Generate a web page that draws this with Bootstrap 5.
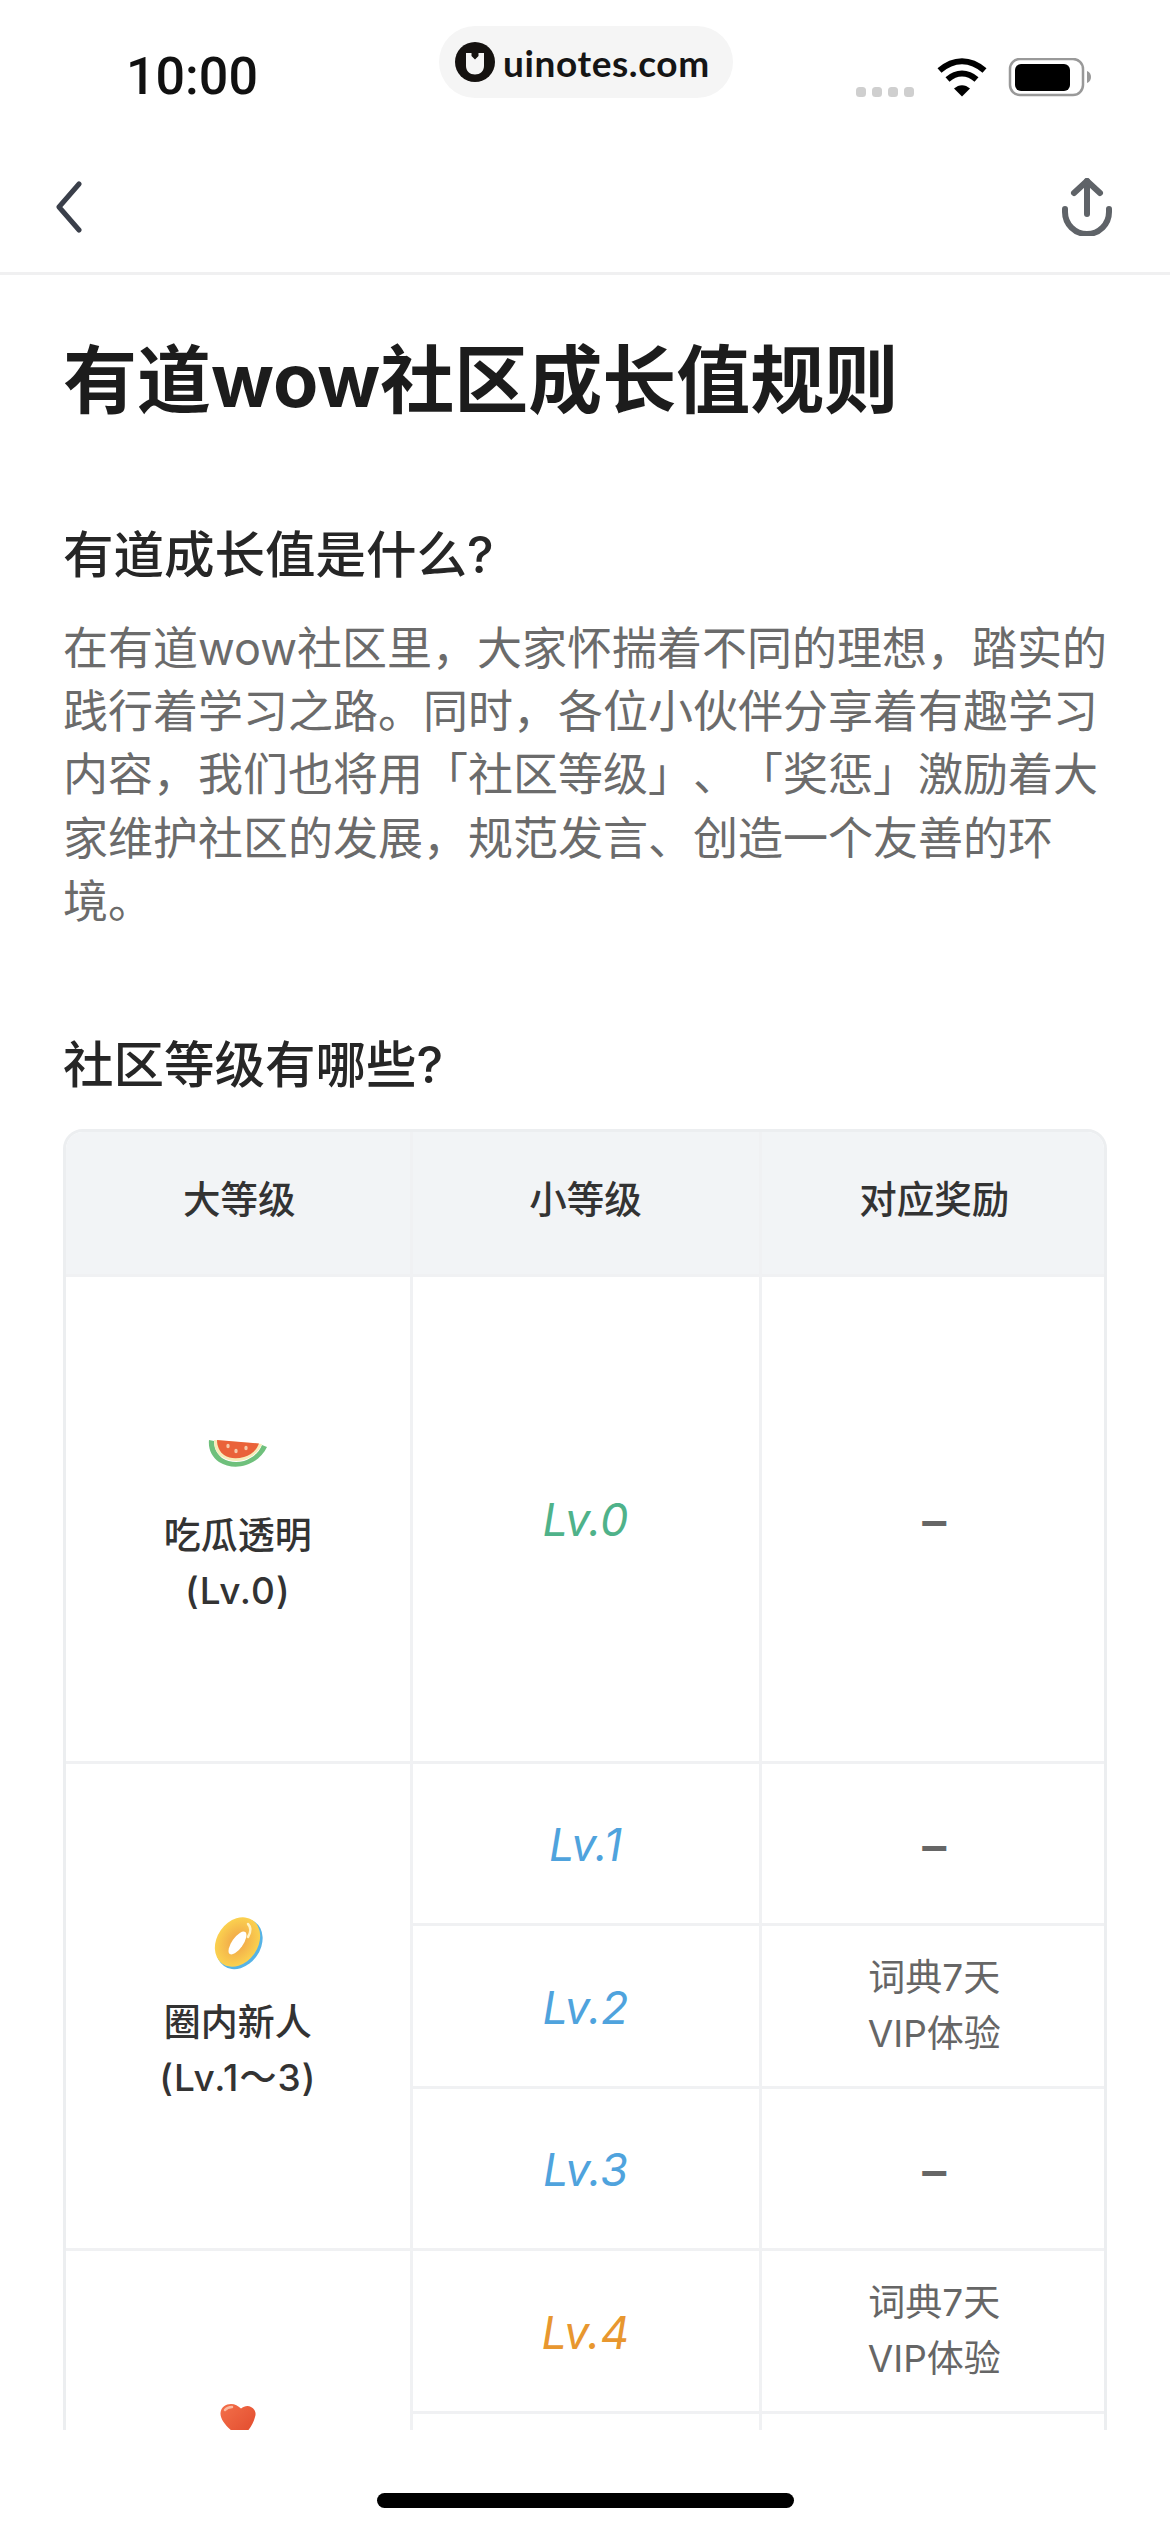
<!DOCTYPE html>
<html lang="zh">
<head>
  <meta charset="UTF-8">
  <meta name="viewport" content="width=device-width, initial-scale=1">
  <title>有道wow社区成长值规则</title>
  <link href="https://cdn.jsdelivr.net/npm/bootstrap@5.3.3/dist/css/bootstrap.min.css" rel="stylesheet">
  <style>
    html, body {
      height: 2532px;
      overflow: hidden;
    }
    body {
      background-color: #fff;
      color: #222;
      font-family: Inter, "Noto Sans CJK SC", sans-serif;
    }
    .status-row {
      height: 141px;
      padding: 58px 79px 0 126px;
    }
    .status-time {
      font-size: 52px;
      line-height: 38px;
      font-weight: 500;
      color: #111;
      font-family: Roboto, sans-serif;
    }
    .mark-pill {
      position: absolute;
      left: 439px;
      top: 26px;
      width: 294px;
      height: 72px;
      border-radius: 36px;
      background-color: #f5f5f5;
      padding-left: 16px;
      gap: 8px;
    }
    .mark-text {
      font-family: Lato, sans-serif;
      font-weight: 700;
      font-size: 37px;
      letter-spacing: .6px;
      color: #151515;
      line-height: 1;
    }
    .top-nav {
      height: 134px;
      padding: 0 58px 0 56px;
      border-bottom: 3px solid #f0f0f1;
    }
    .page-body {
      height: 2155px;
      overflow: hidden;
      padding: 60px 63px 0;
    }
    .page-title {
      font-size: 74px;
      line-height: 90px;
      font-weight: 700;
      color: #1c1c1c;
      margin: 0 0 100px;
    }
    .sub-title {
      font-size: 50.5px;
      line-height: 60px;
      font-weight: 500;
      color: #262626;
      margin: 0 0 32px;
    }
    .intro-text {
      font-size: 45px;
      line-height: 63.2px;
      color: #6b6b6b;
      margin: 0 0 102px;
      white-space: nowrap;
      text-spacing-trim: space-all;
    }
    .sub-title.tight {
      margin-bottom: 34px;
    }
    .table-wrap {
      border: 3px solid #eceef0;
      border-radius: 20px;
      overflow: hidden;
    }
    .lvl-table {
      table-layout: fixed;
      margin: 0;
      border-collapse: collapse;
    }
    .lvl-table th, .lvl-table td {
      border: 3px solid #f0f1f3;
      padding: 0;
      text-align: center;
      vertical-align: middle;
      background: #fff;
      box-shadow: none;
    }
    .lvl-table th {
      height: 143px;
      padding-bottom: 5px;
      background: #f2f4f6;
      font-size: 37.5px;
      font-weight: 500;
      color: #333;
      border-top: 0;
      border-bottom: 0;
    }
    .lvl-table th:first-child, .lvl-table .grp-cell {
      border-left: 0;
    }
    .lvl-table th:first-child {
      padding-left: 3px;
    }
    .lvl-table th:last-child, .lvl-table td:last-child {
      border-right: 0;
      padding-left: 3px;
    }
    .row-big {
      height: 487px;
    }
    .row-std {
      height: 162.5px;
    }
    .lvl-table .grp-cell {
      font-size: 37px;
      line-height: 55px;
      color: #333;
      font-weight: 500;
      padding-top: 6px;
    }
    .lvl-table .grp-cell.top-start {
      vertical-align: top;
      padding-top: 150px;
    }
    .grp-range {
      letter-spacing: 1px;
    }
    .grp-icon {
      display: block;
      width: 60px;
      height: 60px;
      margin: 0 auto 22px;
    }
    .lvl-name {
      font-size: 45px;
      font-style: italic;
      font-weight: 450;
    }
    .lvl-table .lvl-name {
      padding-top: 3px;
    }
    .lvl-green { color: #4fb28a; }
    .lvl-blue { color: #4fa3dd; }
    .lvl-orange { color: #e8972f; }
    .reward-text {
      font-size: 37px;
      line-height: 56px;
      color: #666;
    }
    .lvl-table .reward-dash {
      font-size: 48px;
      font-weight: 600;
      color: #666;
      padding-top: 5px;
    }
    .home-bar {
      width: 417px;
      height: 15px;
      border-radius: 8px;
      background-color: #000;
      margin: 63px auto 0;
    }
  </style>
</head>

<body>

  <!-- status bar -->
  <div class="status-row d-flex justify-content-between align-items-start">
    <div class="status-time">10:00</div>
    <svg width="235" height="40" viewBox="856 58 235 40">
      <g fill="#cfcfcf">
        <rect x="856" y="87" width="10" height="10" rx="3.5"/>
        <rect x="872" y="87" width="10" height="10" rx="3.5"/>
        <rect x="888" y="87" width="10" height="10" rx="3.5"/>
        <rect x="904" y="87" width="10" height="10" rx="3.5"/>
      </g>
      <g fill="none" stroke="#000" stroke-width="6">
        <path d="M939.5 70.5c14-12.500 31-12.500 45 0"/>
        <path d="M947.500 79.500c9-8 20-8 29 0"/>
      </g>
      <path d="M954 88.500c5-4.500 11-4.500 16 0l-8 8z" fill="#000"/>
      <rect x="1010" y="59" width="73" height="36" rx="10" fill="none" stroke="#999" stroke-width="2.500"/>
      <rect x="1015" y="64" width="55" height="27" rx="6" fill="#000"/>
      <path d="M1087 71c3 1 4 3.500 4 6s-1 5-4 6z" fill="#999"/>
    </svg>
  </div>

  <div class="mark-pill d-flex align-items-center">
    <svg width="40" height="40" viewBox="0 0 40 40">
      <circle cx="20" cy="20" r="20" fill="#151210"/>
      <path d="M11 11h5.500v3l3.500 3.500 3.500-3.500v-3H29v13c0 5-4 8.500-9 8.500s-9-3.500-9-8.500z" fill="#f5f5f5"/>
    </svg>
    <span class="mark-text">uinotes.com</span>
  </div>

  <!-- nav -->
  <div class="top-nav d-flex justify-content-between align-items-center">
    <svg width="26" height="52" viewBox="0 0 26 52">
      <path d="M23 3 3 26l20 23" fill="none" stroke="#3a3f4a" stroke-width="5" stroke-linecap="round" stroke-linejoin="round"/>
    </svg>
    <svg width="50" height="58" viewBox="0 0 50 58">
      <g fill="none" stroke="#5f6368" stroke-width="6" stroke-linecap="round" stroke-linejoin="round">
        <path d="M25 3v33"/>
        <path d="M12 15 25 3l13 12"/>
        <path d="M3 31v3a22 22 0 0 0 44 0v-3"/>
      </g>
    </svg>
  </div>

  <div class="page-body">
    <h1 class="page-title">有道wow社区成长值规则</h1>

    <h2 class="sub-title">有道成长值是什么?</h2>
    <p class="intro-text">在有道wow社区里，大家怀揣着不同的理想，踏实的<br>践行着学习之路。同时，各位小伙伴分享着有趣学习<br>内容，我们也将用「社区等级」、「奖惩」激励着大<br>家维护社区的发展，规范发言、创造一个友善的环<br>境。</p>

    <h2 class="sub-title tight">社区等级有哪些?</h2>

    <div class="table-wrap">
      <table class="table lvl-table">
        <colgroup>
          <col style="width: 345px">
          <col style="width: 349px">
          <col style="width: 344px">
        </colgroup>
        <thead>
          <tr>
            <th>大等级</th>
            <th>小等级</th>
            <th>对应奖励</th>
          </tr>
        </thead>
        <tbody>
          <tr class="row-big">
            <td class="grp-cell">
              <svg class="grp-icon" viewBox="0 0 60 60">
                <path d="M1 14c-1 9 3 17 10 22 8 5 18 6 27 3 10-3 17-10 21-18l-5-2c-3 8-10 13-18 16-8 2-16 1-22-3-6-5-8-11-8-17z" fill="#6fc07c"/>
                <path d="M6 14c0 7 2 13 8 17 6 4 14 5 22 3 8-3 15-8 18-16z" fill="#f7ecb8"/>
                <path d="M9 14c0 7 3 12 7 15 6 4 13 4 20 2 7-2 12-6 15-13.500z" fill="#ea6239"/>
                <g fill="#f6c9a8">
                  <ellipse cx="20" cy="20" rx="1.700" ry="2.300"/>
                  <ellipse cx="28" cy="25" rx="1.700" ry="2.300"/>
                  <ellipse cx="38" cy="22" rx="1.700" ry="2.300"/>
                </g>
              </svg>
              <div>吃瓜透明</div>
              <div class="grp-range">(Lv.0)</div>
            </td>
            <td class="lvl-name lvl-green">Lv.0</td>
            <td class="reward-dash">–</td>
          </tr>
          <tr class="row-std">
            <td class="grp-cell" rowspan="3">
              <svg class="grp-icon" viewBox="0 0 60 60">
                <defs>
                  <radialGradient id="ringFill" cx="50%" cy="50%" r="55%">
                    <stop offset="30%" stop-color="#f3b04a"/>
                    <stop offset="100%" stop-color="#fcd650"/>
                  </radialGradient>
                </defs>
                <ellipse cx="31.500" cy="31" rx="21" ry="27" transform="rotate(35 31.500 31)" fill="#56b3e6"/>
                <ellipse cx="29.500" cy="29" rx="20.500" ry="26.500" transform="rotate(35 29.500 29)" fill="url(#ringFill)"/>
                <ellipse cx="29.500" cy="30" rx="5.500" ry="13.500" transform="rotate(35 29.500 30)" fill="#fff"/>
                <path d="M40 11c3 3 3 8 0 13" fill="none" stroke="#fff3c4" stroke-width="2.500" stroke-linecap="round"/>
              </svg>
              <div>圈内新人</div>
              <div class="grp-range">(Lv.1～3)</div>
            </td>
            <td class="lvl-name lvl-blue">Lv.1</td>
            <td class="reward-dash">–</td>
          </tr>
          <tr class="row-std">
            <td class="lvl-name lvl-blue">Lv.2</td>
            <td class="reward-text">词典7天<br>VIP体验</td>
          </tr>
          <tr class="row-std">
            <td class="lvl-name lvl-blue">Lv.3</td>
            <td class="reward-dash">–</td>
          </tr>
          <tr class="row-std">
            <td class="grp-cell top-start" rowspan="2">
              <svg class="grp-icon" viewBox="0 0 60 60">
                <defs>
                  <linearGradient id="heartFill" x1="0" y1="0" x2="1" y2="1">
                    <stop offset="0%" stop-color="#f4704a"/>
                    <stop offset="100%" stop-color="#e0492c"/>
                  </linearGradient>
                </defs>
                <path d="M33 36C22 30 12 20 12.500 12 13 6 18 3 23 3c4 0 7 2 10 4.500C36 5 40 4 43 6c4 2 5.500 6 4 10-2 8-7 15-14 20z" fill="url(#heartFill)"/>
                <path d="M17 9c1.500-2 4-3 7-3" fill="none" stroke="#fbb9a0" stroke-width="2.500" stroke-linecap="round"/>
              </svg>
            </td>
            <td class="lvl-name lvl-orange">Lv.4</td>
            <td class="reward-text">词典7天<br>VIP体验</td>
          </tr>
          <tr class="row-std">
            <td></td>
            <td></td>
          </tr>
        </tbody>
      </table>
    </div>
  </div>

  <div class="home-bar"></div>

  <script src="https://cdn.jsdelivr.net/npm/bootstrap@5.3.3/dist/js/bootstrap.bundle.min.js"></script>
</body>
</html>
